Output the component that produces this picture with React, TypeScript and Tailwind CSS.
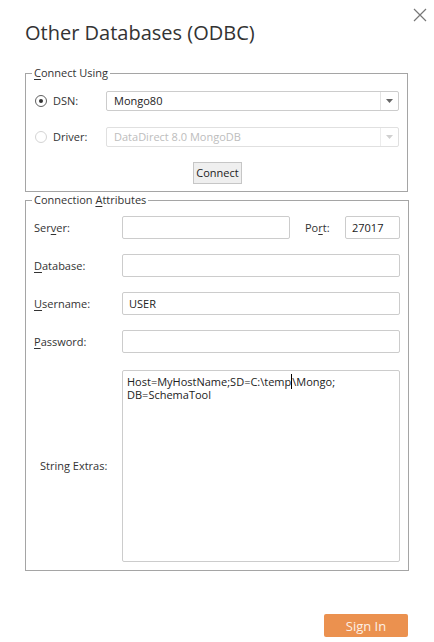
import React from "react";

function Radio({ checked, disabled }: { checked?: boolean; disabled?: boolean }) {
  return (
    <span
      className={`flex h-[12px] w-[12px] shrink-0 items-center justify-center rounded-full border bg-white ${
        disabled ? "border-[#d4d4d4]" : "border-[#5f5f5f]"
      }`}
    >
      {checked && <span className="h-[4px] w-[4px] rounded-full bg-[#333]" />}
    </span>
  );
}

function Select({ value, disabled }: { value: string; disabled?: boolean }) {
  return (
    <div
      className={`flex h-[20px] flex-1 items-stretch rounded-[2px] border ${
        disabled ? "border-[#e0e0e0] text-[#bdbdbd]" : "border-[#cccccc] text-[#222]"
      }`}
    >
      <div className="flex flex-1 items-center pl-[7px]">{value}</div>
      <div
        className={`flex w-[18px] items-center justify-center border-l ${
          disabled ? "border-[#ececec]" : "border-[#e3e3e3]"
        }`}
      >
        <svg width="7" height="4" viewBox="0 0 7 4">
          <path d="M0 0h7L3.5 4z" fill={disabled ? "#d0d0d0" : "#666"} />
        </svg>
      </div>
    </div>
  );
}

function Field({ value, className }: { value?: string; className?: string }) {
  return (
    <div
      className={`flex h-[23px] items-center rounded-[2px] border border-[#cccccc] bg-white pl-[6px] text-[#222] ${
        className ?? "flex-1"
      }`}
    >
      {value}
    </div>
  );
}

export default function App() {
  return (
    <div className="relative h-[642px] w-[434px] bg-white font-['Open_Sans',sans-serif] text-[11px] leading-[14px] text-[#333]">
      <button className="absolute left-[413px] top-[8px] text-[#777]">
        <svg width="14" height="14" viewBox="0 0 14 14">
          <path d="M1 1l12 12M13 1L1 13" stroke="currentColor" strokeWidth="1.2" />
        </svg>
      </button>

      <div className="w-[408px] pl-[25px] pt-[19px]">
        <h1 className="text-[20px] leading-[28px] text-[#333]">Other Databases (ODBC)</h1>

        <fieldset className="mt-[19px] border border-[#a5a5a5]">
          <legend className="ml-[6px] px-[2px] text-[#333]">
            <u className="underline-offset-2">C</u>onnect Using
          </legend>
          <div className="pb-[7px] pl-[9px] pr-[8px] pt-[11px]">
            <div className="flex h-[20px] items-center">
              <div className="flex w-[71px] items-center gap-[6px]">
                <Radio checked />
                <span>DSN:</span>
              </div>
              <Select value="Mongo80" />
            </div>
            <div className="mt-[16px] flex h-[20px] items-center">
              <div className="flex w-[71px] items-center gap-[6px]">
                <Radio disabled />
                <span>Driver:</span>
              </div>
              <Select value="DataDirect 8.0 MongoDB" disabled />
            </div>
            <div className="mt-[15px] flex justify-center pl-[1px]">
              <button className="h-[22px] w-[49px] border border-[#c6c6c6] bg-[#efefef] text-[11px] text-[#222]">
                Connect
              </button>
            </div>
          </div>
        </fieldset>

        <fieldset className="mt-px border border-[#a5a5a5]">
          <legend className="ml-[6px] px-[2px] text-[#333]">
            Connection <u className="underline-offset-2">A</u>ttributes
          </legend>
          <div className="pb-[8px] pl-[8px] pr-[8px] pt-[9px]">
            <div className="flex items-center">
              <span className="w-[88px]">
                Ser<u className="underline-offset-2">v</u>er:
              </span>
              <Field className="w-[168px]" />
              <span className="ml-[15px] w-[40px]">
                Po<u className="underline-offset-2">r</u>t:
              </span>
              <Field className="w-[55px]" value="27017" />
            </div>
            <div className="mt-[15px] flex items-center">
              <span className="w-[88px]">
                <u className="underline-offset-2">D</u>atabase:
              </span>
              <Field />
            </div>
            <div className="mt-[15px] flex items-center">
              <span className="w-[88px]">
                <u className="underline-offset-2">U</u>sername:
              </span>
              <Field value="USER" />
            </div>
            <div className="mt-[15px] flex items-center">
              <span className="w-[88px]">
                <u className="underline-offset-2">P</u>assword:
              </span>
              <Field />
            </div>
            <div className="mt-[17px] flex items-center">
              <span className="w-[88px] pl-[6px]">String Extras:</span>
              <div className="h-[192px] flex-1 rounded-[2px] border border-[#cccccc] px-[4px] pt-[4px] leading-[13px] text-[#222]">
                Host=MyHostName;SD=C:\temp
                <span className="border-l border-black">\Mongo;</span>
                <br />
                DB=SchemaTool
              </div>
            </div>
          </div>
        </fieldset>

        <div className="mt-[43px] flex justify-end">
          <button className="h-[23px] w-[84px] rounded-[2px] bg-[#eb914f] text-[13px] text-[#fdf0e6]">
            Sign In
          </button>
        </div>
      </div>
    </div>
  );
}
